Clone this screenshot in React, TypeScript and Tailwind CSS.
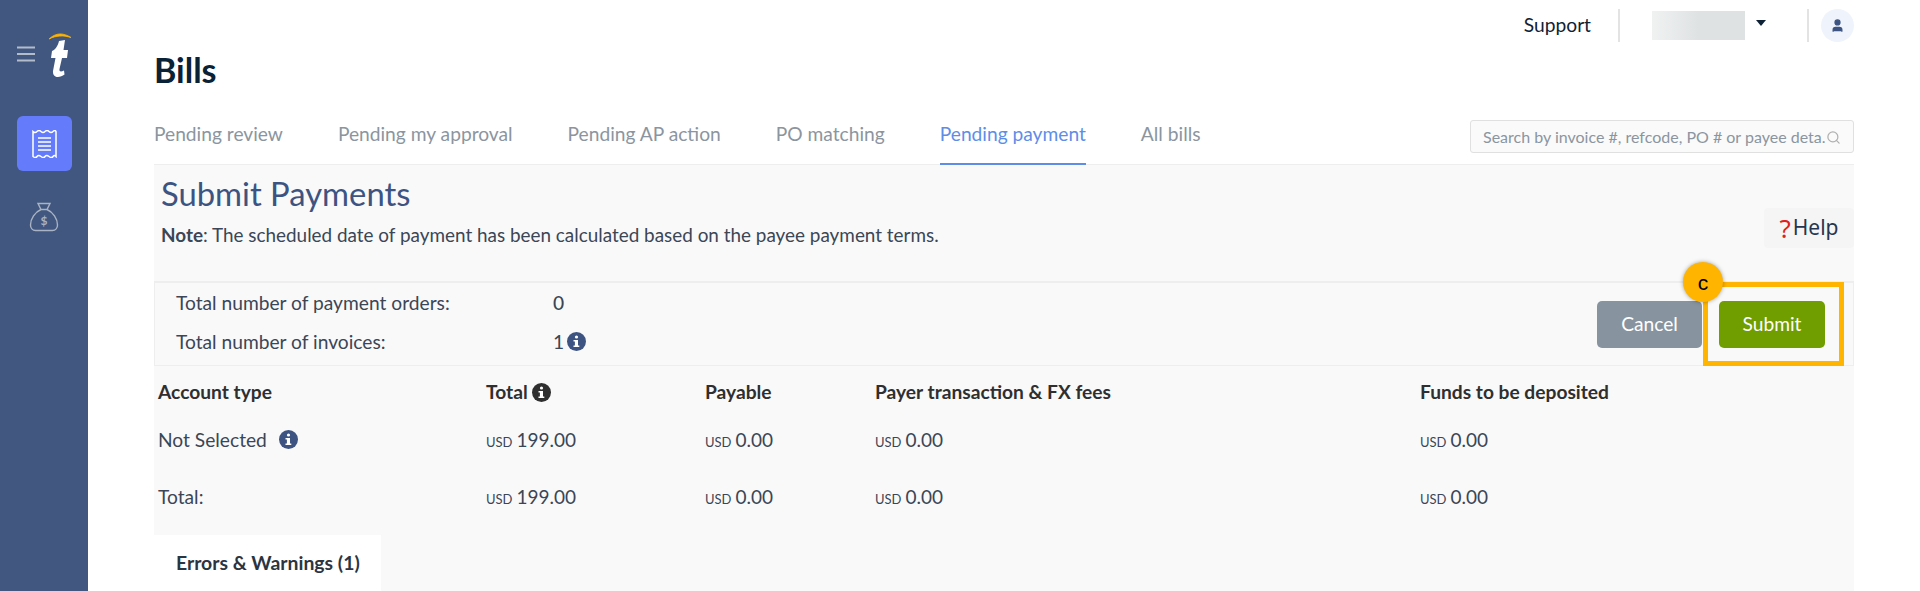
import { User, Search } from "lucide-react";

const tabs = ["Pending review", "Pending my approval", "Pending AP action", "PO matching", "Pending payment", "All bills"];

function Info({ dark = false }: { dark?: boolean }) {
  return (
    <span className={`inline-flex h-[19px] w-[19px] items-center justify-center rounded-full ${dark ? "bg-[#2f2f2f]" : "bg-[#3d5482]"}`}>
      <svg width="9" height="13" viewBox="0 0 9 13" fill="#fff">
        <circle cx="4.5" cy="2" r="1.6" />
        <path d="M1.5 5h4.5v5.4h1.3V12H1.5v-1.6h1.4V6.6H1.5z" />
      </svg>
    </span>
  );
}

function Money({ v }: { v: string }) {
  return (
    <span className="flex items-baseline gap-[4px] text-[19px] text-[#3b4656]">
      <span className="text-[13px]">USD</span>
      {v}
    </span>
  );
}

function Row({ label, total, className }: { label: React.ReactNode; total: string; className: string }) {
  return (
    <div className={`grid grid-cols-[328px_219px_170px_545px_1fr] items-center pl-[4px] text-[19.2px] text-[#3b4656] ${className}`}>
      <div className="flex items-center gap-[12px]">{label}</div>
      <Money v={total} />
      <Money v="0.00" />
      <Money v="0.00" />
      <Money v="0.00" />
    </div>
  );
}

export default function App() {
  return (
    <div className="flex h-[591px] w-[1920px] overflow-hidden bg-white font-['Lato',sans-serif]">
      <aside className="flex w-[88px] shrink-0 flex-col items-center bg-[#41577f]">
        <div className="mt-[30px] flex h-[50px] w-[56px] items-center justify-between">
          <svg width="20" height="18" viewBox="0 0 20 18" stroke="#b3bccb" strokeWidth="2.200" className="mt-[-2px]">
            <path d="M1 2.500h18M1 9h18M1 15.500h18" />
          </svg>
          <svg width="24" height="46" viewBox="0 0 24 46">
            <path d="M1 7C8 .5 15 .5 23 5.500C15 3 8 3.500 1 7Z" fill="#ffb400" stroke="#ffb400" strokeWidth=".8" />
            <path d="M11 9L17 8L15.500 18H20L19 26H14L11.500 37C11 40 13 40 16 38.500L16.500 42.500C12 46 4.500 46.500 5 39L7.500 26H3L4 19C7 18 10 14 11 9Z" fill="#fff" />
          </svg>
        </div>
        <div className="mt-[36px] flex h-[55px] w-[55px] items-center justify-center rounded-[6px] bg-[#647cfb]">
          <svg width="25" height="28" viewBox="0 0 25 28" fill="none" stroke="#fff" strokeWidth="1.500">
            <path d="M1 1.500q2 2 4 0t4 0 4 0 4 0 4 0 3 0V26.500q-1.500-2-3 0t-4 0-4 0-4 0-4 0-4 0z" />
            <path d="M6 8h13M6 12h13M6 16h13M6 20h13" />
          </svg>
        </div>
        <svg className="mt-[31px]" width="30" height="30" viewBox="0 0 30 30" fill="none" stroke="#a9b3c4" strokeWidth="1.400">
          <path d="M9 1.500h12l-3 6h-6z" />
          <path d="M12 7.500C6 10 1.500 17 1.500 23c0 3 2 5.500 5 5.500h17c3 0 5-2.500 5-5.500 0-6-4.500-13-10.500-15.500" />
          <text x="15" y="23" textAnchor="middle" fontSize="12" fontWeight="700" fill="#a9b3c4" stroke="none" fontFamily="Lato">$</text>
        </svg>
      </aside>

      <main className="flex min-w-0 flex-1 flex-col pl-[66px] pr-[66px]">
        <div className="flex h-[42px] items-start justify-end pt-[9px]">
          <span className="mt-[2px] text-[19.2px] leading-[28px] text-[#0f2235]">Support</span>
          <span className="ml-[27px] h-[33px] w-[2px] bg-[#e3e3e3]" />
          <span className="ml-[32px] mt-[2px] h-[29px] w-[93px] bg-gradient-to-r from-[#f0f2f2] via-[#dfe2e3] to-[#dfe2e3]" />
          <span className="ml-[11px] mt-[11px] h-0 w-0 border-x-[5px] border-t-[6px] border-x-transparent border-t-[#0f2235]" />
          <span className="ml-[41px] h-[33px] w-[2px] bg-[#e3e3e3]" />
          <span className="ml-[12px] flex h-[33px] w-[33px] items-center justify-center rounded-full bg-[#eff3fc]">
            <User className="h-[15px] w-[15px] text-[#3d5482]" fill="#3d5482" />
          </span>
        </div>

        <h1 className="mt-[8px] text-[34px] font-bold leading-[40px] text-[#0a2136]">Bills</h1>

        <div className="mt-[22px] flex h-[53px] items-start justify-between border-b border-[#eeeeee]">
          <div className="flex gap-[55px]">
            {tabs.map((t) => (
              <span
                key={t}
                className={`h-[53px] pt-[8px] text-[19.2px] leading-[27px] ${t === "Pending payment" ? "border-b-2 border-[#5e8de8] text-[#5e8de8]" : "text-[#8b95a0]"}`}
              >
                {t}
              </span>
            ))}
          </div>
          <div className="relative mt-[8px] flex h-[33px] w-[384px] items-center rounded-[3px] border border-[#e0e0e0] bg-[#fafafa] pl-[12px] text-[16px] text-[#8b95a0]">
            <span className="whitespace-nowrap">Search by invoice #, refcode, PO # or payee deta...</span>
            <span className="absolute right-[12px] top-[8px] flex h-[16px] w-[16px] items-center justify-center bg-[#fafafa]">
              <Search className="h-[15px] w-[15px] text-[#b0b0b0]" />
            </span>
          </div>
        </div>

        <section className="relative flex-1 bg-[#f9f9f9]">
          <div className="flex h-[118px] justify-between border-b-2 border-[#eeeeee]">
            <div className="pl-[7px]">
              <h2 className="mt-[10px] text-[32.800px] leading-[38px] text-[#3d5482]">Submit Payments</h2>
              <p className="mt-[9px] text-[18.900px] leading-[26px] text-[#3b4656]">
                <b>Note</b>: The scheduled date of payment has been calculated based on the payee payment terms.
              </p>
            </div>
            <div className="mt-[43px] flex h-[40px] w-[90px] items-center justify-center rounded-[4px] bg-[#f5f5f5] font-['Noto_Sans',sans-serif] text-[21px] text-[#27364f]">
              <span className="mr-[2px] text-[26px] leading-none text-[#e02020]">?</span>Help
            </div>
          </div>

          <div className="flex h-[83px] items-center justify-between border-x border-b border-[#eeeeee] pl-[21px] pr-[28px]">
            <div className="grid grid-cols-[377px_auto] gap-y-[12px] pb-[4px] text-[19.2px] leading-[27px] text-[#3b4656]">
              <span>Total number of payment orders:</span>
              <span className="font-medium">0</span>
              <span>Total number of invoices:</span>
              <span className="flex items-center gap-[3px]">1 <Info /></span>
            </div>
            <div className="flex gap-[17px]">
              <button className="h-[47px] w-[105px] rounded-[5px] bg-[#87949f] text-[19.2px] text-white">Cancel</button>
              <button className="h-[47px] w-[106px] rounded-[5px] bg-[#709e00] text-[19.2px] text-white">Submit</button>
            </div>
          </div>

          <div className="grid h-[53px] grid-cols-[328px_219px_170px_545px_1fr] items-center pl-[4px] text-[19.2px] font-bold text-[#2f2f2f]">
            <span>Account type</span>
            <span className="flex items-center gap-[4px]">Total <Info dark /></span>
            <span>Payable</span>
            <span>Payer transaction &amp; FX fees</span>
            <span>Funds to be deposited</span>
          </div>
          <Row className="h-[42px]" total="199.00" label={<>Not Selected <Info /></>} />
          <Row className="mt-[15px] h-[42px]" total="199.00" label="Total:" />

          <div className="mt-[17px] flex h-[56px] w-[227px] items-center bg-white pl-[22px] text-[19.4px] font-bold text-[#2b3542]">
            Errors &amp; Warnings (1)
          </div>

          <div className="pointer-events-none absolute left-[1549px] top-[117px] h-[84px] w-[141px] border-[5px] border-[#ffb400]" />
          <div className="absolute left-[1529px] top-[97px] flex h-[40px] w-[40px] items-center justify-center rounded-full bg-[#ffb400] font-['Liberation_Sans',sans-serif] text-[21px] leading-none text-black shadow-[0_0_4px_rgba(0,0,0,0.35)]">
            c
          </div>
        </section>
      </main>
    </div>
  );
}
